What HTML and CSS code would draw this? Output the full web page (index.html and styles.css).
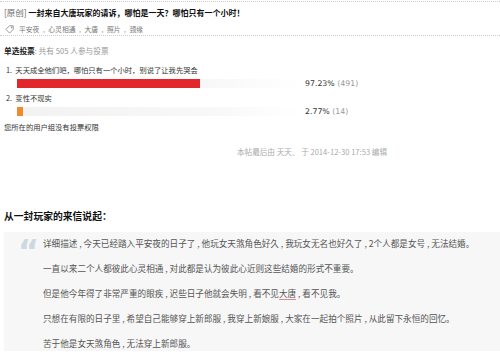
FILE: index.html
```html
<!DOCTYPE html>
<html lang="zh-CN">
<head>
  <meta charset="UTF-8" />
  <title>一封来自大唐玩家的请诉</title>
  <link rel="stylesheet" href="styles.css">
</head>
<body>
  <div class="head">
    <h1 class="title"><span class="kind">[原创]</span> 一封来自大唐玩家的请诉，哪怕是一天？哪怕只有一个小时！</h1>
    <div class="tags">
      <svg class="tag-ico" width="9" height="9" viewBox="0 0 9 9">
        <path d="M4.5 0.8 H8.2 V4.5 L4.6 8.1 L0.9 4.4 Z" fill="none" stroke="#999" stroke-width="1"/>
        <circle cx="6.6" cy="2.4" r="0.8" fill="#999"/>
      </svg>
      <span>平安夜</span> , <span>心灵相通</span> , <span>大唐</span> , <span>照片</span> , <span>颈缘</span>
    </div>
  </div>

  <div class="poll">
    <div class="poll-head"><b>单选投票</b><span>: 共有 505 人参与投票</span></div>
    <div class="opt">1.&nbsp; 天天成全他们吧，哪怕只有一个小时，别说了让我先哭会</div>
    <div class="bar-row">
      <div class="track"><div class="bar red" style="width:183px"></div></div>
      <div class="pct">97.23% <span>(491)</span></div>
    </div>
    <div class="opt">2.&nbsp; 变性不现实</div>
    <div class="bar-row">
      <div class="track"><div class="bar orange" style="width:6px"></div></div>
      <div class="pct">2.77% <span>(14)</span></div>
    </div>
    <div class="noperm">您所在的用户组没有投票权限</div>
  </div>

  <div class="edited">本帖最后由 天天、 于 2014-12-30 17:53 编辑</div>

  <h2 class="sub">从一封玩家的来信说起：</h2>

  <div class="quote">
    <div class="qmark">&ldquo;</div>
    <div class="qtext">
      <p>详细描述 , 今天已经踏入平安夜的日子了 , 他玩女天煞角色好久 , 我玩女无名也好久了 , 2个人都是女号 , 无法结婚。</p>
      <p>一直以来二个人都彼此心灵相通 , 对此都是认为彼此心近则这些结婚的形式不重要。</p>
      <p>但是他今年得了非常严重的眼疾 , 迟些日子他就会失明 , 看不见<span class="mark">大唐</span> , 看不见我。</p>
      <p>只想在有限的日子里 , 希望自己能够穿上新郎服 , 我穿上新娘服 , 大家在一起拍个照片 , 从此留下永恒的回忆。</p>
      <p>苦于他是女天煞角色 , 无法穿上新郎服。</p>
    </div>
  </div>
</body>
</html>
```

FILE: styles.css
```css
* { margin:0; padding:0; box-sizing:border-box }
body {
  width:500px; height:356px; overflow:hidden;
  background:#fff; color:#333;
  font-family:"Noto Sans CJK SC","DejaVu Sans",sans-serif;
  padding:1px 0 0 4px;
}

/* header */
.head { border-top:1px dotted #ccc; margin-left:-4px; padding-left:4px; border-bottom:1px dotted #ccc }
.title { font-size:8px; line-height:20px; font-weight:700; color:#111; white-space:nowrap }
.title .kind { font-weight:400; color:#666; font-size:8.5px }
.tags { font-size:6.8px; line-height:12px; color:#777; display:flex; align-items:center; gap:2px; white-space:pre }
.tag-ico { margin:0 3px 0 1px }

/* poll */
.poll { padding-top:9px; font-size:7.3px }
.poll-head { line-height:12px; font-size:7.7px }
.poll-head b { font-weight:700; color:#222 }
.poll-head span { color:#999 }
.opt { line-height:12px; margin-top:7px; padding-left:2px; color:#333 }
.opt + .bar-row + .opt { margin-top:4px }
.bar-row { display:flex; align-items:center; gap:5px; margin-top:3px; padding-left:13px }
.track { width:283px; height:9px; background:linear-gradient(90deg,#f2f2f2,#f8f8f8 70%,#fff) }
.bar { height:9px }
.bar.red { background:#e3262a }
.bar.orange { background:#ef8b2c }
.pct { font-family:"DejaVu Sans",sans-serif; font-size:7.8px; color:#333 }
.pct span { color:#999 }
.noperm { line-height:12px; margin-top:5px; color:#333 }

.edited { margin:13px 0 0 233px; font-size:7.6px; line-height:12px; color:#aaa; white-space:nowrap }

.sub { margin-top:51px; font-size:9.8px; line-height:14px; font-weight:700; color:#111 }

/* quote */
.quote {
  display:flex; margin-top:9px;
  background:#f7f7f7; padding:4px 0 1px 14px;
}
.qmark {
  width:25px; flex:none;
  font-family:"DejaVu Sans",sans-serif; font-weight:700;
  font-size:32px; line-height:30px; height:20px; color:#cdd8e3;
}
.qtext p { font-size:8.6px; line-height:14px; color:#555; margin-bottom:11px; white-space:nowrap }
.qtext p:last-child { margin-bottom:0 }
.mark { border-bottom:1px solid #d98a8a }
```
